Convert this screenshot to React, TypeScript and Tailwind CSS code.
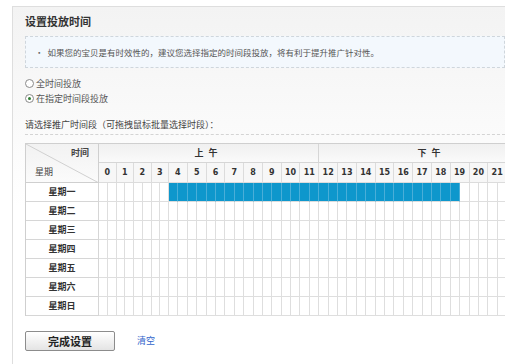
import React from 'react'

const HOURS = Array.from({ length: 24 }, (_, i) => i)
const DAYS = ['星期一', '星期二', '星期三', '星期四', '星期五', '星期六', '星期日']

// selected half-hour slots per day: [start, end) in half-hour index
const SELECTED: Record<number, [number, number]> = { 0: [8, 39] }

export default function App() {
  return (
    <div className="relative h-[364px] w-[505px] overflow-hidden bg-white font-['Noto_Sans_CJK_SC',sans-serif] text-[#333]">
      <div className="ml-[12px] mt-[6px] h-[400px] border-l border-t border-[#dedede] bg-gradient-to-b from-[#f3f3f3] via-white to-white pl-[12px]">
        <h1 className="pt-[6px] text-[11px] font-bold leading-[16px] text-[#333]">设置投放时间</h1>

        <div className="mt-[7px] flex h-[32px] items-center border border-dashed border-[#cfd6dc] bg-[#f3f8fd] pl-[9px] text-[8.5px] leading-[12px] text-[#555]">
          <span className="mr-[4px] text-[#666]">•</span>
          如果您的宝贝是有时效性的，建议您选择指定的时间段投放，将有利于提升推广针对性。
        </div>

        <div className="mt-[8px] text-[9px] leading-[15px] text-[#555]">
          <label className="flex items-center gap-[2px]">
            <span className="inline-block h-[9px] w-[9px] rounded-full border border-[#8a8a8a] bg-white" />
            全时间投放
          </label>
          <label className="flex items-center gap-[2px]">
            <span className="flex h-[9px] w-[9px] items-center justify-center rounded-full border border-[#8a8a8a] bg-white">
              <span className="h-[3px] w-[3px] rounded-full bg-[#2e7d32]" />
            </span>
            在指定时间段投放
          </label>
        </div>

        <p className="mt-[13px] text-[9px] leading-[12px] text-[#444]">请选择推广时间段（可拖拽鼠标批量选择时段）：</p>
        <div className="mt-[3px] border-t border-dashed border-[#d4d4d4]" />

        <div className="mt-[8px] grid w-max grid-cols-[73px_repeat(8,8.75px)_repeat(40,9.4px)] grid-rows-[19px_20px_repeat(7,19px)] border-l border-t border-[#cfcfcf]">
          <div className="relative row-span-2 border-b border-r border-[#cfcfcf] bg-gradient-to-b from-[#f2f2f2] to-[#fbfbfb]">
            <svg className="absolute inset-0" width="73" height="39" viewBox="0 0 73 39">
              <line x1="0" y1="0" x2="73" y2="39" stroke="#d0d0d0" strokeWidth="1" />
            </svg>
            <span className="absolute right-[9px] top-[3px] text-[9px] font-bold leading-[12px] text-[#444]">时间</span>
            <span className="absolute bottom-[4px] left-[9px] text-[9px] leading-[12px] text-[#444]">星期</span>
          </div>
          <div className="col-span-24 flex items-center justify-center border-b border-r border-[#d6d6d6] bg-gradient-to-b from-[#f0f0f0] to-[#fafafa] text-[9px] font-bold tracking-[5px] text-[#333]">上午</div>
          <div className="col-span-24 flex items-center justify-center border-b border-r border-[#d6d6d6] bg-gradient-to-b from-[#f0f0f0] to-[#fafafa] text-[9px] font-bold tracking-[5px] text-[#333]">下午</div>
          {HOURS.map((h) => (
            <div key={h} className="col-span-2 flex items-center justify-center border-b border-r border-[#dcdcdc] bg-[#f7f7f7] font-['DejaVu_Sans',sans-serif] text-[8px] font-bold text-[#333]">
              {h}
            </div>
          ))}
          {DAYS.map((d, di) => (
            <React.Fragment key={d}>
              <div className="flex items-center justify-center border-b border-r border-[#d6d6d6] bg-white text-[9px] font-bold text-[#333]">{d}</div>
              {Array.from({ length: 48 }, (_, i) => {
                const sel = SELECTED[di]
                const on = sel && i >= sel[0] && i < sel[1]
                return (
                  <div
                    key={i}
                    className={on ? 'border-b border-r border-b-[#dcdcdc] border-r-[#4aaed8] bg-[#0e97cc]' : 'border-b border-r border-[#dedede] bg-white'}
                  />
                )
              })}
            </React.Fragment>
          ))}
        </div>

        <div className="mt-[15px] flex items-center">
          <button type="button" className="h-[20px] w-[90px] rounded-[2px] border border-[#8c8c8c] bg-gradient-to-b from-white to-[#e4e4e4] text-[11px] font-bold leading-[18px] text-[#222]">完成设置</button>
          <a className="ml-[22px] text-[9px] text-[#3366cc]">清空</a>
        </div>
      </div>
    </div>
  )
}
